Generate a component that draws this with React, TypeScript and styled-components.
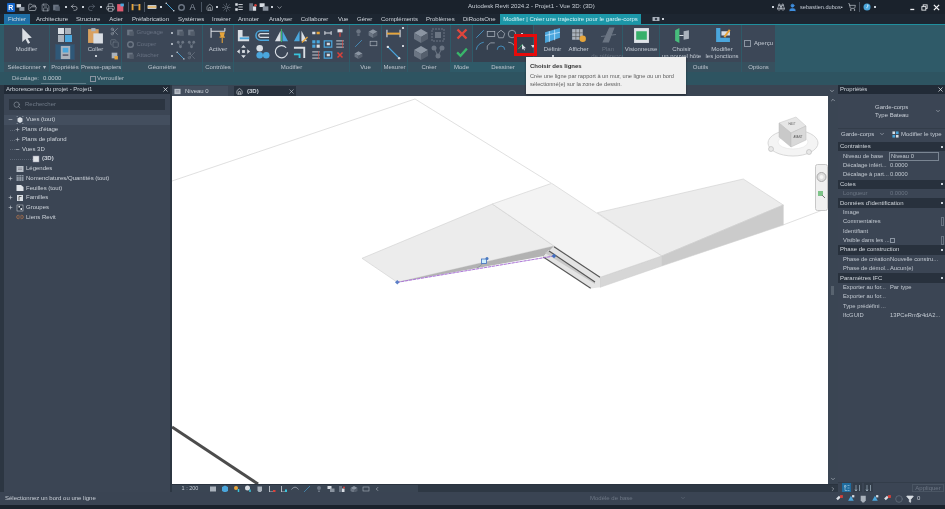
import React from 'react';
import styled, { createGlobalStyle } from 'styled-components';
import { Scissors, Copy, Search, X, Home, Printer, Save, FolderOpen, Undo2, Redo2, ShoppingCart, User, ChevronUp, ChevronDown, Link2, Minus, Plus, Filter, Sun, Binoculars, Circle, ChevronLeft, ChevronRight } from 'lucide-react';

const Global = createGlobalStyle`
  html, body { margin: 0; padding: 0; background: #1a222c; }
  * { box-sizing: border-box; }
`;

const App_ = styled.div`
  position: relative; width: 945px; height: 509px; overflow: hidden;
  background: #1a222c; color: #d5dbe2;
  font: 6px/7px "Liberation Sans", Arial, sans-serif;
  display: flex; flex-direction: column; filter: blur(.3px);
`;
const TitleBar = styled.div`height: 14px; display: flex; align-items: center; background: #1a222c;`;
const QuickBar = styled.div`width: 290px; padding-left: 7px; display: flex; align-items: center; flex: none;`;
const QSlot = styled.span<{ $w: number }>`width: ${p => p.$w}px; display: flex; justify-content: center; align-items: center; flex: none;`;
const QSep = styled.i`width: 1px; height: 10px; background: #4a5563; display: block; flex: none;`;
const RLogo = styled.b`width: 8px; height: 9px; background: #1565c8; color: #fff; font-size: 7px; line-height: 9px; text-align: center; border-radius: 1px;`;
const QLetter = styled.b`font-size: 9px; line-height: 10px; color: #8a93a0; font-weight: 400;`;
const Dot = styled.i`width: 2px; height: 2px; background: #c8ced6; display: block; flex: none;`;
const Title = styled.div`flex: 1; padding-left: 178px; font-size: 6.1px; line-height: 6px; margin-top: -2px; color: #c8ced6; white-space: nowrap;`;
const UserBox = styled.div`width: 177px; flex: none; display: flex; align-items: center; padding-left: 4px; gap: 3px; font-size: 5.6px;`;
const UserName = styled.span`width: 45px; flex: none; color: #c4cbd4; white-space: nowrap;`;
const WinBtns = styled.span`width: 31px; flex: none; margin-left: 30px; display: flex; justify-content: space-between; align-items: center;`;

const TabBar = styled.div`height: 11px; display: flex; align-items: stretch; padding-left: 4px; border-bottom: 1px solid #1f8f9e; background: #1d2631;`;
const RibbonTab = styled.span<{ $w: number; $kind?: string }>`
  width: ${p => p.$w}px; flex: none; text-align: center; line-height: 10.5px; font-size: 6px; white-space: nowrap;
  color: ${p => p.$kind === 'ctx' ? '#d7f2f5' : '#d0d6dd'};
  background: ${p => p.$kind === 'file' ? '#1e6ea6' : p.$kind === 'ctx' ? '#1c97a8' : 'transparent'};
`;
const TabExtra = styled.span`margin-left: 11px; display: flex; align-items: center; gap: 2px;`;

const Ribbon = styled.div`height: 47px; display: flex; gap: 1px; padding-left: 4px; background: #2f5a68;`;
const Panel = styled.section<{ $w: number; $dark?: boolean }>`
  width: ${p => p.$w}px; flex: none; display: flex; flex-direction: column; background: ${p => p.$dark ? '#364150' : '#3c4757'};
`;
const PanelBody = styled.div<{ $pad?: string; $gap?: number; $align?: string }>`
  height: 37px; display: flex; padding: ${p => p.$pad ?? '2px 0 0'}; gap: ${p => p.$gap ?? 0}px;
  justify-content: ${p => p.$align ?? 'center'}; overflow: visible;
`;
const PanelLabel = styled.div<{ $accent?: boolean }>`
  height: 10px; line-height: 10px; text-align: center; color: #bcc4cd; white-space: nowrap; font-size: 6px;
  background: ${p => p.$accent ? '#2f5a68' : '#37505e'};
`;
const Big = styled.div<{ $w?: number; $off?: boolean }>`
  width: ${p => p.$w ?? 30}px; flex: none; display: flex; flex-direction: column; align-items: center; text-align: center;
  color: ${p => p.$off ? '#6b7583' : '#c4cbd4'}; line-height: 7px; gap: 2px;
`;
const Col = styled.div<{ $gap?: number; $w?: number }>`display: flex; flex-direction: column; gap: ${p => p.$gap ?? 0}px; align-items: center; ${p => p.$w ? `width:${p.$w}px;flex:none;` : ''}`;
const IconGrid = styled.div<{ $cols: number; $size: number; $row?: number }>`
  display: grid; grid-template-columns: repeat(${p => p.$cols}, ${p => p.$size}px);
  grid-auto-rows: ${p => p.$row ?? p.$size}px; align-items: center; justify-items: center; flex: none;
`;
const DisabledRow = styled.div`display: flex; align-items: center; gap: 2px; height: 11.5px; width: 50px; color: #667080; font-size: 6px;`;
const DropDot = styled.i`width: 2px; height: 2px; background: #aab2bc; margin-left: auto; margin-right: 3px; display: block;`;
const Selected = styled.div`width: 20px; height: 16px; background: #2f5878; border: 1px solid #36506a; display: flex; align-items: center; justify-content: center;`;
const CheckRow = styled.label`display: flex; align-items: center; gap: 3px; color: #c4cbd4; margin-top: 13px; align-self: flex-start;`;
const Box = styled.i<{ $s?: number }>`width: ${p => p.$s ?? 7}px; height: ${p => p.$s ?? 7}px; border: 1px solid #8b95a2; display: block; flex: none;`;
const Caret = styled.i`width: 0; height: 0; border: 2px solid transparent; border-top: 3px solid #d0d6dd; border-bottom: 0; display: block;`;

const OptionsBar = styled.div`height: 13px; background: #2e5461; display: flex; align-items: center; padding-left: 12px; color: #b6bfc8;`;
const OptInput = styled.span`margin-left: 2px; width: 45px; height: 10px; border-bottom: 1px solid #5e7c88; color: #c5ccd4; line-height: 8px; padding-left: 2px;`;
const OptCheck = styled.span`margin-left: 4px; display: flex; gap: 1px; align-items: center;`;

const Main = styled.div`height: 407px; display: flex; padding-left: 4px; background: #2c3642;`;
const LeftPanel = styled.aside`width: 166px; flex: none; margin-right: 2px; background: #3b4554; display: flex; flex-direction: column;`;
const PanelHead = styled.div`height: 9px; background: #222b37; display: flex; align-items: center; justify-content: space-between; padding: 0 1px 0 2px; color: #cfd5dc; font-size: 6px; flex: none;`;
const SearchBox = styled.div`margin: 5px 5px 5px; height: 11px; background: #2c3541; display: flex; align-items: center; gap: 4px; padding-left: 4px; color: #6f7987; flex: none;`;
const Tree = styled.ul`list-style: none; margin: 0; padding: 0;`;
const TreeRow = styled.li<{ $lvl: number; $active?: boolean; $bold?: boolean }>`
  height: 9.75px; display: flex; align-items: center; gap: 2px; position: relative;
  padding-left: ${p => p.$lvl === 2 ? 19 : p.$lvl === 1 ? 10 : 3}px;
  background: ${p => p.$active ? '#434e5e' : 'transparent'};
  font-weight: ${p => p.$bold ? 700 : 400}; color: #cdd3da; white-space: nowrap;
  ${p => p.$lvl > 0 ? `&::before { content: ""; position: absolute; left: 6px; top: 5px; width: ${p.$lvl === 2 ? 23 : 5}px; border-top: 1px dotted #5c6675; }` : ''}
`;
const Expander = styled.span`width: 6px; display: flex; justify-content: center; flex: none; color: #c0c7cf; position: relative;`;
const TreeIcon = styled.span`width: 9px; height: 9px; display: flex; justify-content: center; align-items: center; flex: none; position: relative;`;

const Center = styled.div`width: 666px; flex: none; display: flex; flex-direction: column; background: #3a4553;`;
const ViewTabs = styled.div`height: 11px; display: flex; gap: 6px; background: #3a4553; flex: none; position: relative;`;
const ViewTab = styled.div<{ $w: number; $on?: boolean }>`
  width: ${p => p.$w}px; flex: none; display: flex; align-items: center; gap: 4px; padding-left: 2px; margin-top: 1px;
  background: ${p => p.$on ? '#28323e' : '#434e5d'}; color: #cdd3da; font-weight: ${p => p.$on ? 700 : 400};
`;
const TabClose = styled.span`margin-left: auto; margin-right: 1px; display: flex;`;
const TabsMenu = styled.span`margin-left: auto; margin-right: 3px; margin-top: 3px;`;
const CanvasRow = styled.div`height: 388px; display: flex; flex: none;`;
const Canvas = styled.div`width: 656px; height: 388px; background: #fff; flex: none; position: relative; overflow: hidden;`;
const Drawing = styled.svg`display: block;`;
const NavBar = styled.svg`position: absolute; left: 643px; top: 68px;`;
const VScroll = styled.div`width: 10px; flex: none; background: #3a4553; display: flex; flex-direction: column; align-items: center; justify-content: space-between; position: relative; padding: 1px 0 2px;`;
const Grip = styled.i`position: absolute; top: 190px; left: 3px; width: 3px; height: 9px; background: #58636f;`;
const ViewBar = styled.div`height: 8px; display: flex; align-items: center; background: #3a4553; flex: none; border-top: 1px solid #2a333f;`;
const Scale = styled.span`width: 32px; text-align: center; flex: none; padding-left: 4px; font-size: 5.5px; color: #c4cbd4;`;
const ViewIcons = styled.div`width: 214px; display: flex; gap: 3.75px; padding-left: 5px; align-items: center; flex: none;`;
const HScroll = styled.div`flex: 1; height: 7px; background: #2e3844; display: flex; justify-content: flex-end; padding-right: 2px; align-items: center;`;

const RightPanel = styled.aside`width: 107px; flex: none; background: #3b4554; display: flex; flex-direction: column;`;
const TypeSel = styled.div`height: 35px; display: grid; grid-template-columns: 37px 1fr 10px; align-items: center; border-bottom: 1px solid #333d4a; color: #c8ced6; line-height: 8px; flex: none;`;
const TypeRow = styled.div`height: 11px; display: flex; align-items: center; padding-left: 3px; color: #c4cbd4; flex: none; gap: 2px;`;
const TypeName = styled.span`width: 47px; display: flex; justify-content: space-between; padding-right: 3px; margin-right: 2px;`;
const PropList = styled.div`margin-top: 2px; flex: 1; display: flex; flex-direction: column;`;
const SectionHead = styled.div`height: 9.4px; background: #28313d; display: flex; justify-content: space-between; align-items: center; padding: 0 2px 0 2px; color: #d1d6dc; white-space: nowrap;`;
const PropRow = styled.div<{ $off?: boolean }>`
  height: 9.4px; display: grid; grid-template-columns: 47px 1fr; align-items: center; padding-left: 5px; white-space: nowrap; font-size: 5.8px;
  color: ${p => p.$off ? '#6b7583' : '#c3cad2'}; position: relative;
`;
const PropInput = styled.span`display: block; border: 1px solid #7a8592; height: 9px; line-height: 7px; width: 50px; padding-left: 1px; margin-left: -1px;`;
const RowEdit = styled.i`position: absolute; right: 1px; top: 0; width: 3px; height: 9px; border: 1px solid #6a7482; display: block;`;
const PropFoot = styled.div`height: 10px; display: flex; align-items: center; padding-left: 4px; gap: 2px; flex: none; border-top: 1px solid #333d4a;`;
const SortBtn = styled.span<{ $on?: boolean }>`width: 9px; height: 9px; display: flex; justify-content: center; align-items: center; background: ${p => p.$on ? '#1f6c9e' : '#333d4a'};`;
const Apply = styled.span`margin-left: auto; margin-right: 1px; width: 32px; height: 8px; border: 1px solid #4a5563; color: #6c7684; text-align: center; line-height: 6px;`;

const StatusBar = styled.footer`height: 13px; display: flex; align-items: center; padding-left: 5px; background: #3a4453; color: #c8ced6; flex: none;`;
const StatusText = styled.span`width: 585px; flex: none; white-space: nowrap;`;
const ModelSel = styled.span`width: 100px; flex: none; color: #6c7684; display: flex; justify-content: space-between; padding-right: 4px;`;
const StatusIcons = styled.span`margin-left: 145px; display: flex; gap: 3px; align-items: center;`;
const Edge = styled.div`height: 4px; background: #1a222c; flex: none;`;

const RedBox = styled.div`position: absolute; left: 514px; top: 34px; width: 23px; height: 22px; border: 3px solid #e60a0a;`;
const Tooltip = styled.div`
  position: absolute; left: 526px; top: 57px; width: 160px; height: 37px; background: #f0f0f0; color: #5c5c5c;
  box-shadow: 0 1px 2px rgba(0,0,0,.4); padding: 5px 0 0 4px; font-size: 5.65px; line-height: 8px;
`;
const TipTitle = styled.b`display: block; color: #333; margin: 0 0 2px; font-size: 6px;`;
const TipLine = styled.span`display: block; white-space: nowrap;`;

const Ico = styled.svg`display: block; flex: none;`;
const c = { w: '#d9dee4', b: '#4aa6dc', g: '#6b7583', lg: '#aab2bc', o: '#e6a53b', r: '#d9413a', gr: '#3db46a', cy: '#38c4dc' };
const paths: Record<string, React.ReactNode> = {
  cursor: <path d="M4 1v13l3-2.6 2.4 4.4 2-1-2.4-4.3 4-.5z" fill={c.w} />,
  props: <><rect x="1" y="1" width="6" height="6" fill={c.w} /><rect x="8" y="1" width="6" height="6" fill={c.lg} /><rect x="1" y="8" width="6" height="7" fill={c.lg} /><rect x="8" y="8" width="7" height="7" fill={c.b} /></>,
  panel: <><rect x="3" y="1" width="10" height="14" fill={c.lg} /><rect x="5" y="3" width="6" height="5" fill={c.b} /><rect x="5" y="10" width="6" height="1.5" fill="#556" /></>,
  paste: <><rect x="1" y="2" width="10" height="13" fill="#d9a160" /><rect x="4" y="1" width="4" height="3" fill={c.lg} /><rect x="6" y="6" width="9" height="9.5" fill={c.w} /></>,
  pasteSm: <><rect x="3" y="3" width="10" height="10" fill={c.lg} /><rect x="8" y="9" width="6" height="6" fill={c.o} /></>,
  gray: <><path d="M2 3h10v10H2z" fill={c.g} /><path d="M6 6h8v8H6z" fill="#525c6a" /></>,
  ring: <><circle cx="8" cy="8" r="5" fill="none" stroke={c.g} strokeWidth="2.5" /></>,
  activate: <><path d="M1 1v9M1 4h13M14 1v3" stroke={c.w} strokeWidth="1" fill="none" /><path d="M9 5h5l-1 4h1v1H9V9h1z" fill={c.o} /><path d="M11.5 10v5" stroke={c.o} /></>,
  align: <><path d="M2 2h5v7h7v5H2z" fill={c.w} /><path d="M4 11h10" stroke={c.b} strokeWidth="2" /></>,
  offset: <><path d="M15 3H6a5 5 0 0 0 0 10h9" fill="none" stroke={c.b} strokeWidth="1.6" /><path d="M15 6H6a2 2 0 0 0 0 4h9" fill="none" stroke={c.w} strokeWidth="1.2" /></>,
  mirror: <><path d="M1 14l6-11v11z" fill={c.w} /><path d="M15 14L9 3v11z" fill={c.b} /><path d="M8 1v14" stroke={c.gr} /></>,
  mirrorP: <><path d="M1 14l6-11v11z" fill={c.b} /><path d="M15 14L9 3v11z" fill={c.w} /><path d="M9 15l6-6 1 1-6 6z" fill={c.o} /></>,
  move: <><path d="M8 1l2.5 3h-5zM8 15l2.5-3h-5zM1 8l3-2.5v5zM15 8l-3-2.5v5z" fill={c.w} /><rect x="6.5" y="6.5" width="3" height="3" fill={c.w} /></>,
  copyB: <><circle cx="5" cy="4.5" r="3.5" fill={c.w} /><circle cx="5" cy="12" r="3.5" fill={c.b} /><circle cx="12" cy="12" r="3.5" fill={c.b} /></>,
  rotate: <path d="M13 4a6.5 6.5 0 1 0 1.5 5" fill="none" stroke={c.w} strokeWidth="1.2" />,
  trim: <><path d="M1 4h11v11" fill="none" stroke={c.w} strokeWidth="2" /><path d="M1 11h6v4" fill="none" stroke={c.cy} strokeWidth="2" /></>,
  sA: <><rect x="2" y="6" width="5" height="4" fill={c.w} /><rect x="9" y="6" width="5" height="4" fill={c.o} /></>,
  sB: <><rect x="2" y="2" width="5" height="5" fill={c.b} /><rect x="9" y="2" width="5" height="5" fill={c.b} /><rect x="2" y="9" width="5" height="5" fill={c.b} /><rect x="9" y="9" width="5" height="5" fill={c.w} /></>,
  sC: <><rect x="2" y="3" width="12" height="10" fill="none" stroke={c.b} strokeWidth="2" /><rect x="6" y="6" width="5" height="4" fill={c.w} /></>,
  sD: <path d="M3 8h10M3 5v6M13 5v6" stroke={c.w} strokeWidth="1.6" fill="none" />,
  sE: <><path d="M2 3h12M2 8h12M2 13h12" stroke={c.w} strokeWidth="1.4" /><path d="M12 2v12" stroke={c.r} /></>,
  sPin: <><path d="M4 2h8v5H4z" fill={c.w} /><path d="M8 7v7" stroke={c.r} strokeWidth="2" /></>,
  sX: <path d="M3 3l10 10M13 3L3 13" stroke={c.r} strokeWidth="3" />,
  bulb: <><circle cx="8" cy="6" r="4" fill={c.g} /><rect x="6" y="11" width="4" height="3" fill={c.g} /></>,
  dim: <><path d="M1 3v8M15 3v8M1 7h14" stroke={c.w} strokeWidth="1.2" /><rect x="1" y="6" width="14" height="2" fill={c.o} /></>,
  measure: <><path d="M2 2l12 12" stroke={c.b} strokeWidth="1.5" /><circle cx="2" cy="2" r="1.3" fill={c.w} /><circle cx="14" cy="14" r="1.3" fill={c.w} /></>,
  cube: <><path d="M1 6l7-4 7 4-7 4z" fill="#8b95a2" /><path d="M1 6v6l7 4v-6z" fill="#6b7583" /><path d="M15 6v6l-7 4v-6z" fill="#555f6d" /></>,
  cubeS: <><rect x="2" y="2" width="12" height="12" fill="none" stroke={c.g} strokeDasharray="2 1" /><rect x="5" y="5" width="6" height="6" fill={c.g} /></>,
  nodes: <><circle cx="4" cy="4" r="2.5" fill={c.g} /><circle cx="12" cy="4" r="2.5" fill={c.g} /><circle cx="8" cy="12" r="2.5" fill={c.g} /><path d="M4 4l4 8 4-8" stroke={c.g} fill="none" /></>,
  cancel: <path d="M2 2l12 12M14 2L2 14" stroke="#e0463c" strokeWidth="3.2" />,
  ok: <path d="M1.5 8.5l4.5 4.5L14.5 3.5" stroke="#39b56a" strokeWidth="3" fill="none" />,
  dLine: <path d="M2 14L14 2" stroke={c.b} strokeWidth="1.2" />,
  dRect: <rect x="2" y="4" width="12" height="8" fill="none" stroke={c.lg} strokeWidth="1.2" />,
  dPoly: <path d="M8 2l6 5-2.3 7H4.3L2 7z" fill="none" stroke={c.lg} strokeWidth="1.2" />,
  dCirc: <circle cx="8" cy="8" r="6" fill="none" stroke={c.lg} strokeWidth="1.2" />,
  dArc: <path d="M2 14C3 7 8 3 14 2" fill="none" stroke={c.b} strokeWidth="1.2" />,
  dArc2: <path d="M2 14V8l5-5h7" fill="none" stroke={c.lg} strokeWidth="1.2" />,
  dArc3: <path d="M2 14a6 6 0 0 1 12 0" fill="none" stroke={c.b} strokeWidth="1.2" />,
  dArc4: <path d="M2 2a12 12 0 0 1 12 12" fill="none" stroke={c.lg} strokeWidth="1.2" />,
  pick: <><path d="M2 13l7-8" stroke={c.gr} strokeWidth="1.4" /><path d="M8 5v9l2-2 1.4 3 1.3-.6-1.4-3h3z" fill={c.w} /></>,
  define: <><path d="M1 5l14-4v9L1 15z" fill={c.b} /><path d="M5 4v10M10 2.500v10M1 8l14-3" stroke="#cdeaff" strokeWidth=".7" /></>,
  show: <><path d="M2 2h10v10H2z" fill={c.lg} /><path d="M5.500 2v10M9 2v10M2 5.500h10M2 9h10" stroke="#555" strokeWidth=".6" /><circle cx="12" cy="11" r="3" fill={c.o} /></>,
  plan: <path d="M3 14L9 1h4L8 14zM1 9l14-2" stroke={c.g} fill={c.g} />,
  viewer: <><rect x="1" y="1" width="14" height="14" fill="#dfe3e8" /><rect x="3" y="4" width="10" height="8" fill="#37b06a" /></>,
  host: <><path d="M2 3l4-2v14l-4-2z" fill="#47bd7c" /><path d="M6 8h4" stroke={c.w} /><path d="M10 4l5-1v8l-5 1z" fill={c.lg} /></>,
  joins: <><path d="M2 1h4v9h9v4H2z" fill={c.b} /><path d="M7 4h8v4H7z" fill={c.w} /><path d="M9 9l5-7 1.500 1-5 7z" fill={c.o} /></>,
  flag: <><path d="M1 3h3v10H1zM12 3h3v10h-3z" fill={c.o} /><path d="M4 5h8" stroke={c.w} /></>,
  dimBar: <><rect x="1" y="5" width="14" height="6" fill={c.w} /><rect x="1" y="7" width="14" height="2" fill={c.o} /></>,
  redFile: <><rect x="2" y="2" width="11" height="13" fill="#e05a70" /><rect x="8" y="1" width="6" height="5" fill={c.b} /></>,
  list: <><rect x="2" y="2" width="4" height="4" fill={c.w} /><path d="M7 4h7M7 8h7M7 12h7" stroke={c.w} strokeWidth="1.4" /><rect x="2" y="10" width="4" height="4" fill={c.w} /></>,
  win2: <><rect x="1" y="2" width="8" height="6" fill={c.w} /><rect x="6" y="7" width="9" height="7" fill="#8a939f" /></>,
  build: <><rect x="2" y="2" width="6" height="12" fill={c.g} /><rect x="8" y="7" width="5" height="7" fill={c.w} /><circle cx="12" cy="5" r="2" fill={c.r} /></>,
  sky: <><circle cx="6" cy="6" r="4" fill={c.o} /><path d="M11 8v7" stroke={c.cy} strokeWidth="3" /></>,
  ball: <><circle cx="7" cy="6" r="5" fill={c.w} /><path d="M12 9v6" stroke={c.cy} strokeWidth="3" /></>,
  hand: <path d="M3 3h9v8l-3 4H6l-3-4z" fill={c.lg} />,
  crop: <><path d="M3 2v12h10" fill="none" stroke={c.w} strokeWidth="1.5" /><rect x="10" y="10" width="5" height="5" fill={c.r} /></>,
  crop2: <><path d="M3 2v12h10" fill="none" stroke={c.w} strokeWidth="1.5" /><rect x="10" y="9" width="4" height="6" fill={c.cy} /></>,
  eye: <path d="M1 9c4-6 10-6 14 0" fill="none" stroke={c.lg} strokeWidth="1.500" />,
  bulbC: <><circle cx="8" cy="5" r="4" fill={c.cy} /><rect x="6.500" y="9" width="3" height="5" fill={c.w} /></>,
  help: <><circle cx="8" cy="8" r="7" fill={c.b} /><path d="M8 3.500a2 2 0 0 1 1 3.700L8 8.500v2" stroke="#fff" strokeWidth="1.600" fill="none" /></>,
  winMin: <rect x="3" y="11" width="9" height="3" fill="#eef0f3" />,
  winRestore: <><rect x="5" y="2" width="9" height="8" fill="none" stroke="#eef0f3" strokeWidth="2" /><rect x="2" y="6" width="9" height="8" fill="#1a222c" stroke="#eef0f3" strokeWidth="2" /></>,
  winClose: <path d="M2 2l12 12M14 2L2 14" stroke="#f4f5f7" strokeWidth="3" />,
  tile: <rect x="2" y="3" width="12" height="10" fill="#aab2bc" />,
  tileB: <><path d="M2 4l6-3 6 3v8l-6 3-6-3z" fill={c.b} /></>,
  nav: <><path d="M2 8l5-5 3 3-5 5z" fill={c.w} /><rect x="9" y="2" width="5" height="5" fill={c.r} /></>,
  navB: <><path d="M2 12l5-9 5 9z" fill={c.b} /><rect x="9" y="2" width="4" height="4" fill={c.w} /></>,
  tree3d: <><path d="M8 2l5 3v6l-5 3-5-3V5z" fill={c.w} /><path d="M1 1h3M12 1h3M1 15h3M12 15h3" stroke={c.lg} /></>,
  view: <><rect x="2" y="2" width="12" height="12" fill="#e0e3e7" stroke="#99a" /></>,
  legend: <><rect x="1" y="2" width="14" height="12" fill="#b9c0c8" /><path d="M4 6h8M4 9h8" stroke="#667" /></>,
  table: <><rect x="1" y="2" width="14" height="12" fill="#8d97a3" /><path d="M1 5h14M6 2v12M11 2v12" stroke="#39424f" /></>,
  sheet: <path d="M1 2h9l5 4v8H1z" fill="#dfe3e8" />,
  family: <><rect x="2" y="2" width="12" height="12" fill="#d9dee4" /><path d="M6 13V5h5" stroke="#333" fill="none" strokeWidth="1.500" /></>,
  group: <><rect x="2" y="2" width="12" height="12" fill="#2f3845" stroke="#d9dee4" /><path d="M5 4h3v3H5zM9 8h3v4H9z" fill="#d9dee4" /></>,
  typeIcon: <><rect x="1" y="1" width="6" height="6" fill={c.w} /><rect x="9" y="1" width="6" height="6" fill={c.b} /><rect x="1" y="9" width="6" height="6" fill={c.b} /><rect x="9" y="9" width="6" height="6" fill={c.w} /></>,
  sort1: <path d="M4 2v12M11 2v12M2 11l2 3 2-3" stroke="#cfe6f5" fill="none" />,
  tree2: <path d="M3 3h3v3H3zM9 3h4M9 8h4M9 13h4M4 6v7h4" stroke="#cfe6f5" fill="none" />,
  cam: <><rect x="1" y="4" width="14" height="8" rx="1" fill={c.lg} /><circle cx="8" cy="8" r="2.500" fill="#39424f" /></>,
};
const I = ({ n, s = 12 }: { n: string; s?: number }) => <Ico width={s} height={s} viewBox="0 0 16 16">{paths[n]}</Ico>;

const tabs: [string, number, string?][] = [['Fichier', 26, 'file'], ['', 6], ['Architecture', 31], ['', 9], ['Structure', 24], ['', 9], ['Acier', 14], ['', 9], ['Préfabrication', 36], ['', 10], ['Systèmes', 25], ['', 9], ['Insérer', 17], ['', 9], ['Annoter', 21], ['', 10], ['Analyser', 23], ['', 8], ['Collaborer', 29], ['', 9], ['Vue', 10], ['', 9], ['Gérer', 15], ['', 9], ['Compléments', 36], ['', 9], ['Problèmes', 28], ['', 9], ['DiRootsOne', 31], ['', 6], ['Modifier | Créer une trajectoire pour le garde-corps', 141, 'ctx']];

const LU = { size: 9, strokeWidth: 1.6 };
const quick: [number, React.ReactNode][] = [
  [12, <RLogo>R</RLogo>], [22, <I n="win2" s={9} />], [35, <FolderOpen {...LU} color="#cfd5dc" />], [48, <Save {...LU} color="#aab2bc" />], [59, <I n="gray" s={9} />], [68, <Dot />],
  [77, <Undo2 {...LU} color="#d9dee4" />], [85, <Dot />], [94, <Redo2 {...LU} color="#6b7583" />], [103, <Dot />], [112, <Printer {...LU} color="#d9dee4" />], [123, <I n="redFile" s={9} />], [132, <QSep />],
  [138, <I n="flag" s={10} />], [147, <QSep />], [154, <I n="dimBar" s={10} />], [163, <Dot />], [172, <I n="measure" s={10} />], [183, <I n="ring" s={9} />], [196, <QLetter>A</QLetter>], [205, <QSep />],
  [211, <Home {...LU} color="#d9dee4" />], [220, <Dot />], [228, <Sun {...LU} color="#8a939f" />], [240, <I n="list" s={10} />], [256, <I n="build" s={10} />], [268, <I n="win2" s={10} />], [274, <Dot />], [283, <ChevronDown size={7} color="#c8ced6" />],
];

const treeRows: { t: string; l: number; e?: string; i?: string; a?: boolean; b?: boolean }[] = [
  { t: 'Vues (tout)', l: 0, e: '-', i: 'tree3d', a: true },
  { t: "Plans d'étage", l: 1, e: '+' }, { t: 'Plans de plafond', l: 1, e: '+' }, { t: 'Vues 3D', l: 1, e: '-' },
  { t: '(3D)', l: 2, i: 'view', b: true },
  { t: 'Légendes', l: 0, i: 'legend' }, { t: 'Nomenclatures/Quantités (tout)', l: 0, e: '+', i: 'table' }, { t: 'Feuilles (tout)', l: 0, i: 'sheet' },
  { t: 'Familles', l: 0, e: '+', i: 'family' }, { t: 'Groupes', l: 0, e: '+', i: 'group' },
];

const Row = ({ a, b, off, edit }: { a: string; b?: React.ReactNode; off?: boolean; edit?: boolean }) => (
  <PropRow $off={off}><span>{a}</span><span>{b}</span>{edit && <RowEdit />}</PropRow>
);
const Head = ({ t }: { t: string }) => <SectionHead><span>{t}</span><Dot /></SectionHead>;

export default function App() {
  return (
    <App_>
      <Global />
      <TitleBar>
        <QuickBar>
          {quick.map(([x, el], i) => {
            const prev = i ? quick[i - 1][0] : x - 5;
            const next = i < quick.length - 1 ? quick[i + 1][0] : x + 5;
            return <QSlot key={i} $w={(next - prev) / 2}>{el}</QSlot>;
          })}
        </QuickBar>
        <Title>Autodesk Revit 2024.2 - Projet1 - Vue 3D: (3D)</Title>
        <UserBox>
          <Dot /><Binoculars size={8} color="#c8ced6" /><User size={9} color="#3f8fe0" fill="#3f8fe0" />
          <UserName>sebastien.dubos•</UserName>
          <ShoppingCart size={8} color="#c8ced6" />
          <QSep />
          <I n="help" s={8} /><Dot />
          <WinBtns><I n="winMin" s={7} /><I n="winRestore" s={7} /><I n="winClose" s={7} /></WinBtns>
        </UserBox>
      </TitleBar>
      <TabBar>
        {tabs.map(([t, w, k], i) => <RibbonTab key={i} $w={w} $kind={k}>{t}</RibbonTab>)}
        <TabExtra><I n="cam" s={8} /><Dot /></TabExtra>
      </TabBar>
      <Ribbon>
        <Panel $w={45}>
          <PanelBody><Big $w={45}><I n="cursor" s={17} />Modifier</Big></PanelBody>
          <PanelLabel>Sélectionner ▾</PanelLabel>
        </Panel>
        <Panel $w={30}>
          <PanelBody><Col $gap={1}><I n="props" s={16} /><Selected><I n="panel" s={15} /></Selected></Col></PanelBody>
          <PanelLabel>Propriétés</PanelLabel>
        </Panel>
        <Panel $w={40}>
          <PanelBody $align="flex-start" $pad="2px 0 0 0">
            <Big $w={29}><I n="paste" s={17} />Coller<Dot /></Big>
            <Col $gap={3}><Scissors size={9} color="#8a939f" /><Copy size={9} color="#6b7583" /><I n="pasteSm" s={9} /></Col>
          </PanelBody>
          <PanelLabel>Presse-papiers</PanelLabel>
        </Panel>
        <Panel $w={80}>
          <PanelBody $pad="2px 0 0 4px" $align="flex-start">
            <Col $w={49}>
              <DisabledRow><I n="gray" s={9} />Grugeage<DropDot /></DisabledRow>
              <DisabledRow><I n="ring" s={9} />Couper<DropDot /></DisabledRow>
              <DisabledRow><I n="gray" s={9} />Attacher<DropDot /></DisabledRow>
            </Col>
            <IconGrid $cols={2} $size={11} $row={11.500}>
              <I n="gray" s={9} /><I n="gray" s={9} /><I n="nodes" s={9} /><I n="nodes" s={9} /><I n="measure" s={9} /><Scissors size={9} color="#6b7583" />
            </IconGrid>
          </PanelBody>
          <PanelLabel>Géométrie</PanelLabel>
        </Panel>
        <Panel $w={30}>
          <PanelBody><Big $w={30}><I n="activate" s={17} />Activer</Big></PanelBody>
          <PanelLabel>Contrôles</PanelLabel>
        </Panel>
        <Panel $w={115}>
          <PanelBody $pad="2px 0 0 0" $align="flex-start">
            <IconGrid $cols={4} $size={19} $row={16.500}>
              <I n="align" s={15} /><I n="offset" s={15} /><I n="mirror" s={15} /><I n="mirrorP" s={15} />
              <I n="move" s={15} /><I n="copyB" s={15} /><I n="rotate" s={15} /><I n="trim" s={15} />
            </IconGrid>
            <IconGrid $cols={3} $size={12} $row={11}>
              <I n="sA" s={10} /><I n="sD" s={10} /><I n="sPin" s={10} />
              <I n="sB" s={10} /><I n="sC" s={10} /><I n="sE" s={10} />
              <I n="sE" s={10} /><I n="sC" s={10} /><I n="sX" s={8} />
            </IconGrid>
          </PanelBody>
          <PanelLabel>Modifier</PanelLabel>
        </Panel>
        <Panel $w={31}>
          <PanelBody>
            <IconGrid $cols={2} $size={15} $row={11}>
              <I n="bulb" s={9} /><I n="cube" s={10} /><I n="dLine" s={9} /><I n="dRect" s={9} /><I n="cube" s={9} />
            </IconGrid>
          </PanelBody>
          <PanelLabel>Vue</PanelLabel>
        </Panel>
        <Panel $w={25}>
          <PanelBody $gap={1}>
            <Col $gap={3}><I n="dim" s={15} /><I n="measure" s={15} /></Col>
            <Col $gap={16}><Dot /><Dot /></Col>
          </PanelBody>
          <PanelLabel>Mesurer</PanelLabel>
        </Panel>
        <Panel $w={42}>
          <PanelBody>
            <IconGrid $cols={2} $size={17} $row={16.500}>
              <I n="cube" s={16} /><I n="cubeS" s={16} /><I n="cube" s={16} /><I n="nodes" s={16} />
            </IconGrid>
          </PanelBody>
          <PanelLabel>Créer</PanelLabel>
        </Panel>
        <Panel $w={21}>
          <PanelBody $pad="3px 0 0"><Col $gap={6}><I n="cancel" s={12} /><I n="ok" s={12} /></Col></PanelBody>
          <PanelLabel $accent>Mode</PanelLabel>
        </Panel>
        <Panel $w={60} $dark>
          <PanelBody $pad="3px 0 0 2px" $align="flex-start">
            <IconGrid $cols={6} $size={10.500} $row={12}>
              <I n="dLine" s={10} /><I n="dRect" s={10} /><I n="dPoly" s={10} /><I n="dCirc" s={10} /><Dot /><span />
              <I n="dArc" s={10} /><I n="dArc2" s={10} /><I n="dArc3" s={10} /><I n="dArc4" s={10} /><I n="pick" s={10} /><Caret />
            </IconGrid>
          </PanelBody>
          <PanelLabel $accent>Dessiner</PanelLabel>
        </Panel>
        <Panel $w={88}>
          <PanelBody $pad="2px 0 0 4px" $align="flex-start">
            <Big $w={29}><I n="define" s={17} />Définir<Dot /></Big>
            <Big $w={23}><I n="show" s={17} />Afficher</Big>
            <Big $w={36} $off><I n="plan" s={17} />Plan<br />de référence</Big>
          </PanelBody>
          <PanelLabel />
        </Panel>
        <Panel $w={36}>
          <PanelBody><Big $w={36}><I n="viewer" s={17} />Visionneuse</Big></PanelBody>
          <PanelLabel />
        </Panel>
        <Panel $w={81}>
          <PanelBody>
            <Big $w={43}><I n="host" s={17} />Choisir<br />un nouvel hôte</Big>
            <Big $w={38}><I n="joins" s={17} />Modifier<br />les jonctions</Big>
          </PanelBody>
          <PanelLabel>Outils</PanelLabel>
        </Panel>
        <Panel $w={33}>
          <PanelBody><CheckRow><Box />Aperçu</CheckRow></PanelBody>
          <PanelLabel>Options</PanelLabel>
        </Panel>
      </Ribbon>
      <OptionsBar>
        Décalage:<OptInput>0.0000</OptInput>
        <OptCheck><Box $s={6} />Verrouiller</OptCheck>
      </OptionsBar>
      <Main>
        <LeftPanel>
          <PanelHead>Arborescence du projet - Projet1<X size={7} strokeWidth={2.5} color="#e4e8ec" /></PanelHead>
          <SearchBox><Search size={8} color="#8a939f" />Rechercher</SearchBox>
          <Tree>
            {treeRows.map(r => (
              <TreeRow key={r.t} $lvl={r.l} $active={r.a} $bold={r.b}>
                <Expander>{r.e === '+' ? <Plus size={5} strokeWidth={3} /> : r.e === '-' ? <Minus size={5} strokeWidth={3} /> : null}</Expander>
                {r.i && <TreeIcon><I n={r.i} s={8} /></TreeIcon>}
                {r.t}
              </TreeRow>
            ))}
            <TreeRow $lvl={0}><Expander /><TreeIcon><Link2 size={8} color="#c47a4a" /></TreeIcon>Liens Revit</TreeRow>
          </Tree>
        </LeftPanel>
        <Center>
          <ViewTabs>
            <ViewTab $w={56}><I n="legend" s={7} />Niveau 0</ViewTab>
            <ViewTab $w={62} $on><Home size={7} color="#e4e8ec" />(3D)<TabClose><X size={7} strokeWidth={2} /></TabClose></ViewTab>
            <TabsMenu><ChevronDown size={6} /></TabsMenu>
          </ViewTabs>
          <CanvasRow>
            <Canvas>
              <Drawing width={656} height={388} viewBox="172 96 656 388">
                <g fill="none" stroke="#d2d2d2" strokeWidth=".7">
                  <path d="M172 181L415 99L551 183" />
                  <path d="M783 225L828 208" />
                </g>
                <path d="M172 427L258 484" stroke="#4c4c4c" strokeWidth="3" />
                <g stroke="#cfcfcf" strokeWidth=".6" strokeLinejoin="round">
                  <polygon points="597.3,212.700 743.300,179 783.300,205 661.700,256" fill="#ececec" />
                  <polygon points="783.300,205 783.300,225 661.700,266 661.700,256" fill="#cbcbcb" />
                  <polygon points="600,277.300 661.700,256 661.700,266 600,287.300" fill="#d6d6d6" />
                  <polygon points="362,258.300 492.300,204 554,246 397.300,282.300" fill="#ececec" />
                  <polygon points="492.300,204 551.700,183.300 661.700,256 600,277.300 554,246" fill="#f3f3f3" />
                </g>
                <polygon points="397.300,282.300 554,246 554,251 549,250 544,256" fill="#b2b2b2" />
                <polygon points="554,246 600,277.300 600,287.300 591,288.500 543.300,256.700" fill="#e4e4e4" />
                <polygon points="549,250 595,281.700 595,284 545,253" fill="#c8c8c8" />
                <g stroke="#555" strokeWidth="1.100">
                  <path d="M554 246.700L600 277.300" />
                  <path d="M549 251L595 282" />
                  <path d="M543.300 257L590.700 288.300" />
                </g>
                <path d="M397.300 282.300L554 256" stroke="#c65bd6" strokeWidth=".8" strokeDasharray="3 1" />
                <path d="M397.300 282.300L554 256" stroke="#5f78c8" strokeWidth=".3" />
                <path d="M477 268Q481 266 483 263" fill="none" stroke="#7a8594" strokeWidth=".6" />
                <polygon points="397.300,280 399.500,282.300 397.300,284.600 395,282.300" fill="#5b7fc7" />
                <polygon points="554,253.800 556.200,256 554,258.200 551.800,256" fill="#3f6fc0" />
                <rect x="481.500" y="259" width="5" height="4.500" fill="#cdeefc" stroke="#3f6fc0" strokeWidth=".8" />
                <circle cx="487" cy="258.500" r="1.500" fill="#4a78c0" />
                <g>
                  <ellipse cx="793" cy="143" rx="25" ry="13" fill="#f4f4f4" stroke="#d8d8d8" strokeWidth="1" />
                  <ellipse cx="793" cy="142" rx="15" ry="7" fill="#fff" stroke="#e2e2e2" strokeWidth=".6" />
                  <polygon points="779,123 796,117 806,126 791,133" fill="#e6e6e6" stroke="#c4c4c4" strokeWidth=".5" />
                  <polygon points="779,123 791,133 791,147 779,137" fill="#c9c9c9" stroke="#bcbcbc" strokeWidth=".5" />
                  <polygon points="791,133 806,126 806,140 791,147" fill="#d9d9d9" stroke="#bcbcbc" strokeWidth=".5" />
                  <text x="792" y="125" fontSize="2.600" fill="#666" textAnchor="middle" fontFamily="Liberation Sans">HAUT</text>
                  <text x="798" y="138" fontSize="2.800" fill="#555" textAnchor="middle" fontFamily="Liberation Sans">AVANT</text>
                  <circle cx="771" cy="149" r="2.500" fill="#e8e8e8" stroke="#aaa" strokeWidth=".5" />
                  <circle cx="809" cy="152" r="2.500" fill="#e8e8e8" stroke="#aaa" strokeWidth=".5" />
                </g>
              </Drawing>
              <NavBar width={13} height={47} viewBox="0 0 13 47">
                <rect x=".5" y=".5" width="12" height="46" rx="2" fill="#f0f0f0" stroke="#c8c8c8" />
                <circle cx="6.500" cy="13" r="4.500" fill="#ddd" stroke="#aaa" />
                <circle cx="6.500" cy="13" r="2" fill="#f5f5f5" />
                <rect x="3" y="27" width="5" height="5" fill="#7fc48a" />
                <path d="M7 31l3 3" stroke="#777" />
              </NavBar>
            </Canvas>
            <VScroll><ChevronUp size={6} /><Grip /><ChevronDown size={6} /></VScroll>
          </CanvasRow>
          <ViewBar>
            <Scale>1 : 200</Scale>
            <ViewIcons>
              <I n="tile" s={8} /><I n="tileB" s={8} /><I n="sky" s={8} /><I n="ball" s={8} /><I n="hand" s={8} /><I n="crop" s={8} /><I n="crop2" s={8} /><I n="eye" s={8} /><I n="dLine" s={8} /><I n="bulb" s={8} /><I n="win2" s={8} /><I n="build" s={8} /><I n="cube" s={8} /><I n="dRect" s={8} /><ChevronLeft size={6} />
            </ViewIcons>
            <HScroll><ChevronRight size={6} /></HScroll>
          </ViewBar>
        </Center>
        <RightPanel>
          <PanelHead>Propriétés<X size={7} strokeWidth={2.5} color="#e4e8ec" /></PanelHead>
          <TypeSel>
            <span />
            <span>Garde-corps<br />Type Bateau</span>
            <ChevronDown size={6} />
          </TypeSel>
          <TypeRow>
            <TypeName>Garde-corps<ChevronDown size={6} /></TypeName>
            <I n="typeIcon" s={7} />Modifier le type
          </TypeRow>
          <PropList>
            <Head t="Contraintes" />
            <Row a="Niveau de base" b={<PropInput>Niveau 0</PropInput>} />
            <Row a="Décalage inféri..." b="0.0000" />
            <Row a="Décalage à part..." b="0.0000" />
            <Head t="Cotes" />
            <Row a="Longueur" b="0.0000" off />
            <Head t="Données d'identification" />
            <Row a="Image" />
            <Row a="Commentaires" edit />
            <Row a="Identifiant" />
            <Row a="Visible dans les ..." b={<Box $s={5} />} edit />
            <Head t="Phase de construction" />
            <Row a="Phase de création" b="Nouvelle constru..." />
            <Row a="Phase de démol..." b="Aucun(e)" />
            <Head t="Paramètres IFC" />
            <Row a="Exporter au for..." b="Par type" />
            <Row a="Exporter au for..." />
            <Row a="Type prédéfini ..." />
            <Row a="IfcGUID" b="13PCeRm$r4dA2..." />
          </PropList>
          <PropFoot>
            <SortBtn $on><I n="tree2" s={8} /></SortBtn><SortBtn><I n="sort1" s={8} /></SortBtn><SortBtn><I n="sort1" s={8} /></SortBtn>
            <Apply>Appliquer</Apply>
          </PropFoot>
        </RightPanel>
      </Main>
      <StatusBar>
        <StatusText>Sélectionnez un bord ou une ligne</StatusText>
        <ModelSel>Modèle de base<ChevronDown size={6} /></ModelSel>
        <StatusIcons>
          <I n="nav" s={9} /><I n="navB" s={9} /><I n="hand" s={9} /><I n="navB" s={9} /><I n="nav" s={9} /><Circle size={8} color="#6b7583" /><Filter size={8} color="#d9dee4" fill="#d9dee4" />0
        </StatusIcons>
      </StatusBar>
      <Edge />
      <RedBox />
      <Tooltip>
        <TipTitle>Choisir des lignes</TipTitle>
        <TipLine>Crée une ligne par rapport à un mur, une ligne ou un bord</TipLine>
        <TipLine>sélectionné(e) sur la zone de dessin.</TipLine>
      </Tooltip>
    </App_>
  );
}
